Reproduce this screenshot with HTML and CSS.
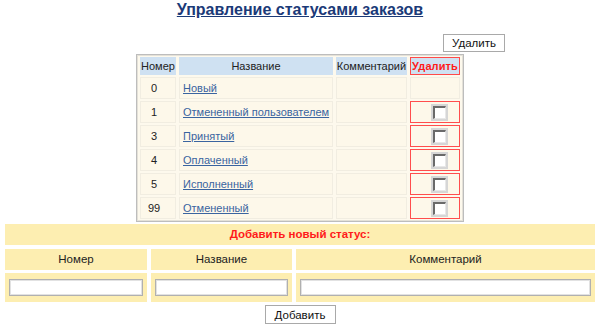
FILE: index.html
```html
<!DOCTYPE html>
<html lang="ru">
<head>
<meta charset="utf-8">
<title>Управление статусами заказов</title>
<link rel="stylesheet" href="styles.css">
</head>
<body>
<h1 class="title"><a href="#">Управление статусами заказов</a></h1>
<div class="toolbar"><button class="btn btn-delete" type="button">Удалить</button></div>
<table class="statuses">
  <thead>
    <tr>
      <th class="c-num">Номер</th>
      <th class="c-name">Название</th>
      <th class="c-comm">Комментарий</th>
      <th class="c-del del-head">Удалить</th>
    </tr>
  </thead>
  <tbody>
    <tr><td class="num">0</td><td class="name"><a href="#">Новый</a></td><td></td><td class="nodel"></td></tr>
    <tr><td class="num">1</td><td class="name"><a href="#">Отмененный пользователем</a></td><td></td><td class="del"><span class="cb"></span></td></tr>
    <tr><td class="num">3</td><td class="name"><a href="#">Принятый</a></td><td></td><td class="del"><span class="cb"></span></td></tr>
    <tr><td class="num">4</td><td class="name"><a href="#">Оплаченный</a></td><td></td><td class="del"><span class="cb"></span></td></tr>
    <tr><td class="num">5</td><td class="name"><a href="#">Исполненный</a></td><td></td><td class="del"><span class="cb"></span></td></tr>
    <tr><td class="num">99</td><td class="name"><a href="#">Отмененный</a></td><td></td><td class="del"><span class="cb"></span></td></tr>
  </tbody>
</table>
<div class="addform">
  <div class="add-title">Добавить новый статус:</div>
  <div class="fields">
    <div class="fh">Номер</div>
    <div class="fh">Название</div>
    <div class="fh">Комментарий</div>
    <div class="fi"><span class="inp"></span></div>
    <div class="fi"><span class="inp"></span></div>
    <div class="fi"><span class="inp"></span></div>
  </div>
  <div class="add-actions"><button class="btn btn-add" type="button">Добавить</button></div>
</div>
</body>
</html>
```
FILE: styles.css
```css
html, body {
  margin: 0;
  padding: 0;
  background: #ffffff;
}
body {
  padding: 0 5px;
  font-family: "Liberation Sans", Arial, sans-serif;
  font-size: 12px;
  color: #222222;
}
.title {
  margin: 0;
  text-align: center;
  font-size: 16px;
  line-height: 20px;
  font-weight: bold;
}
.title a {
  color: #1b3a78;
  text-decoration: underline;
}
.toolbar {
  width: 410px;
  margin: 14px auto 0;
  display: flex;
  justify-content: flex-end;
}
.btn {
  font-family: "Liberation Sans", Arial, sans-serif;
  font-size: 11.5px;
  color: #111111;
  background: #ffffff;
  border: 1px solid #a9a9a9;
  height: 18px;
  padding: 0;
  line-height: 16px;
}
.btn-delete {
  width: 62px;
}
.statuses {
  margin: 2px auto 0;
  border-collapse: separate;
  border-spacing: 3px 2px;
  border: 1px solid #bdbdbd;
  background: #fdf9ed;
  box-shadow: inset 0 0 0 1px #e4e1d8;
  font-size: 11px;
  table-layout: fixed;
}
.statuses th {
  background: #cfe1f2;
  font-weight: normal;
  height: 18px;
  padding: 0;
  text-align: center;
  line-height: 15px;
  white-space: nowrap;
  overflow: visible;
}
.c-num { width: 36px; }
.c-name { width: 154px; }
.c-comm { width: 71px; }
.c-del { width: 50px; }
.statuses th.del-head {
  color: #ff1a1a;
  font-weight: bold;
  border: 1px solid #ff4a4a;
  box-sizing: border-box;
  font-size: 11px;
  letter-spacing: 0.1px;
}
.statuses td {
  height: 20px;
  padding: 0;
  border: 1px solid #f1ede1;
  background: #fdf8ea;
  white-space: nowrap;
}
.statuses td.num {
  text-align: center;
  padding-right: 8px;
}
.statuses td.name {
  padding-left: 3px;
}
.name a {
  color: #3a64a0;
  text-decoration: underline;
}
.statuses td.del {
  border: 1px solid #ff4d4d;
  text-align: center;
}
.cb {
  display: inline-block;
  vertical-align: middle;
  width: 10px;
  height: 10px;
  background: #ffffff;
  border-style: solid;
  border-width: 2px 1px 1px 2px;
  border-color: #6a6a6a #e8e8e8 #e8e8e8 #6a6a6a;
  box-shadow: 0 0 0 2px #d6d6d6;
  margin-left: 8px;
}
.addform {
  margin-top: 2px;
}
.add-title {
  background: #fdeeb1;
  color: #ff1a1a;
  font-weight: bold;
  text-align: center;
  height: 21px;
  line-height: 21px;
  font-size: 11.5px;
}
.fields {
  margin-top: 4px;
  display: grid;
  grid-template-columns: 142px 141px 1fr;
  grid-template-rows: 21px 29px;
  gap: 3px 4px;
  font-size: 11.5px;
}
.fh {
  background: #fdeeb1;
  text-align: center;
  line-height: 21px;
  color: #222222;
}
.fi {
  background: #fdeeb1;
  display: flex;
  align-items: center;
  padding: 0 4px;
}
.inp {
  display: block;
  flex: 1;
  height: 15px;
  background: #ffffff;
  border: 1px solid #b0b0b0;
  box-shadow: inset 0 0 0 1px #e2e2e2;
}
.add-actions {
  display: flex;
  justify-content: center;
  margin-top: 3px;
}
.btn-add {
  width: 71px;
  height: 19px;
}
```
